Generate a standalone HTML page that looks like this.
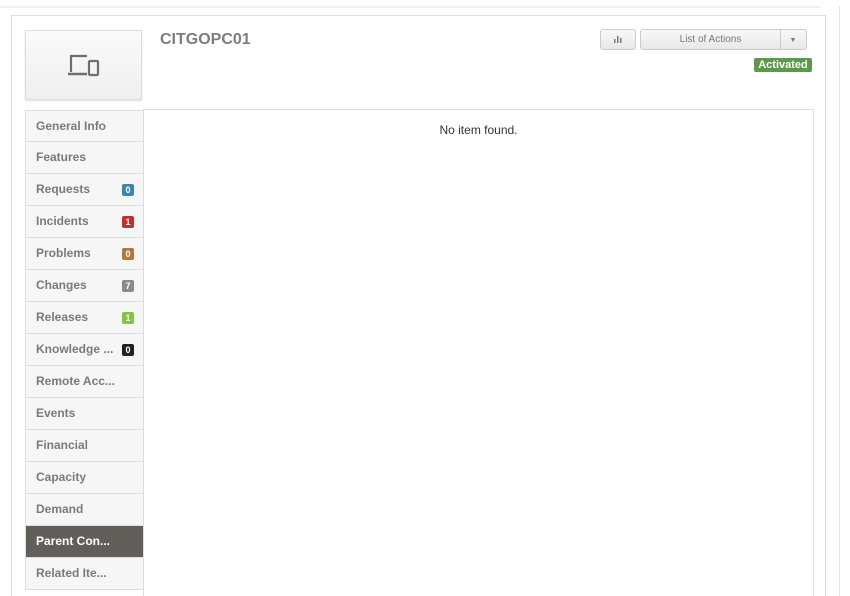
<!DOCTYPE html>
<html><head><style>
*{box-sizing:border-box;margin:0;padding:0}
html,body{width:850px;height:596px;overflow:hidden}
body{background:#fff;font-family:"Liberation Sans",sans-serif;position:relative}
.topline{position:absolute;left:0;top:6px;width:820px;height:2px;background:#efefef}
.vline{position:absolute;left:839px;top:6px;width:1px;height:590px;background:#e5e5e5}
.panel{position:absolute;left:11px;top:15px;width:815px;height:600px;border:1px solid #dcdcdc}
.img{position:absolute;left:25px;top:30px;width:117px;height:70px;background:linear-gradient(#fafafa,#efefef);border:1px solid #ddd;box-shadow:0 1px 2px rgba(0,0,0,.12)}
.title{position:absolute;left:160px;top:31px;font-size:16px;font-weight:bold;color:#7d7d7d}
.btn{position:absolute;top:29px;height:21px;border:1px solid #ccc;border-radius:3px;background:linear-gradient(#f8f8f8,#e8e8e8);font-size:10px;color:#777;text-align:center;line-height:19px}
.act{position:absolute;left:754px;top:58px;width:58px;height:14px;background:#5a9a4a;color:#fff;font-size:11px;font-weight:bold;border-radius:2px;text-align:center;line-height:14px}
.content{position:absolute;left:143px;top:109px;width:671px;height:500px;border:1px solid #dcdcdc}
.empty{position:absolute;left:0;right:0;top:13px;text-align:center;font-size:12px;color:#333}
.side{position:absolute;left:25px;top:110px;width:119px}
.item{height:32px;border:1px solid #ddd;border-top:none;background:#f6f6f6;font-size:12px;font-weight:bold;color:#7a7a7a;padding-left:10px;line-height:31px;position:relative}
.item:first-child{border-top:1px solid #ddd}
.item.on{background:#625f5b;color:#fff}
.b{position:absolute;right:9px;top:10px;width:12px;height:12px;border-radius:2px;color:#fff;font-size:9px;line-height:12px;text-align:center}
</style></head><body>
<div class="topline"></div><div class="vline"></div>
<div class="panel"></div>
<div class="img"><svg style="position:absolute;left:41px;top:22px" width="34" height="24" viewBox="0 0 34 24"><path d="M4 19V3h16" fill="none" stroke="#6e6e6e" stroke-width="2.2"/><path d="M1 21h19" stroke="#6e6e6e" stroke-width="2.4"/><rect x="22" y="8" width="9" height="14" rx="1" fill="none" stroke="#6e6e6e" stroke-width="2.2"/></svg></div>
<div class="title">CITGOPC01</div>
<div class="btn" style="left:600px;width:36px"><svg width="8" height="7" viewBox="0 0 8 7" style="margin-top:6px;vertical-align:top"><rect x="0" y="3" width="1.5" height="4" fill="#777"/><rect x="3" y="0" width="1.5" height="7" fill="#777"/><rect x="6" y="2" width="1.5" height="5" fill="#777"/></svg></div>
<div class="btn" style="left:640px;width:167px;text-align:left"><span style="display:inline-block;width:140px;text-align:center;border-right:1px solid #ccc">List of Actions</span><span style="display:inline-block;width:24px;text-align:center;font-size:7px">&#9660;</span></div>
<div class="act">Activated</div>
<div class="content"><div class="empty">No item found.</div></div>
<div class="side">
<div class="item">General Info</div>
<div class="item">Features</div>
<div class="item">Requests<span class="b" style="background:#3a87ad">0</span></div>
<div class="item">Incidents<span class="b" style="background:#c0302c">1</span></div>
<div class="item">Problems<span class="b" style="background:#b07840">0</span></div>
<div class="item">Changes<span class="b" style="background:#8a8a8a">7</span></div>
<div class="item">Releases<span class="b" style="background:#82c341">1</span></div>
<div class="item">Knowledge ...<span class="b" style="background:#222">0</span></div>
<div class="item">Remote Acc...</div>
<div class="item">Events</div>
<div class="item">Financial</div>
<div class="item">Capacity</div>
<div class="item">Demand</div>
<div class="item on">Parent Con...</div>
<div class="item">Related Ite...</div>
</div>
</body></html>
